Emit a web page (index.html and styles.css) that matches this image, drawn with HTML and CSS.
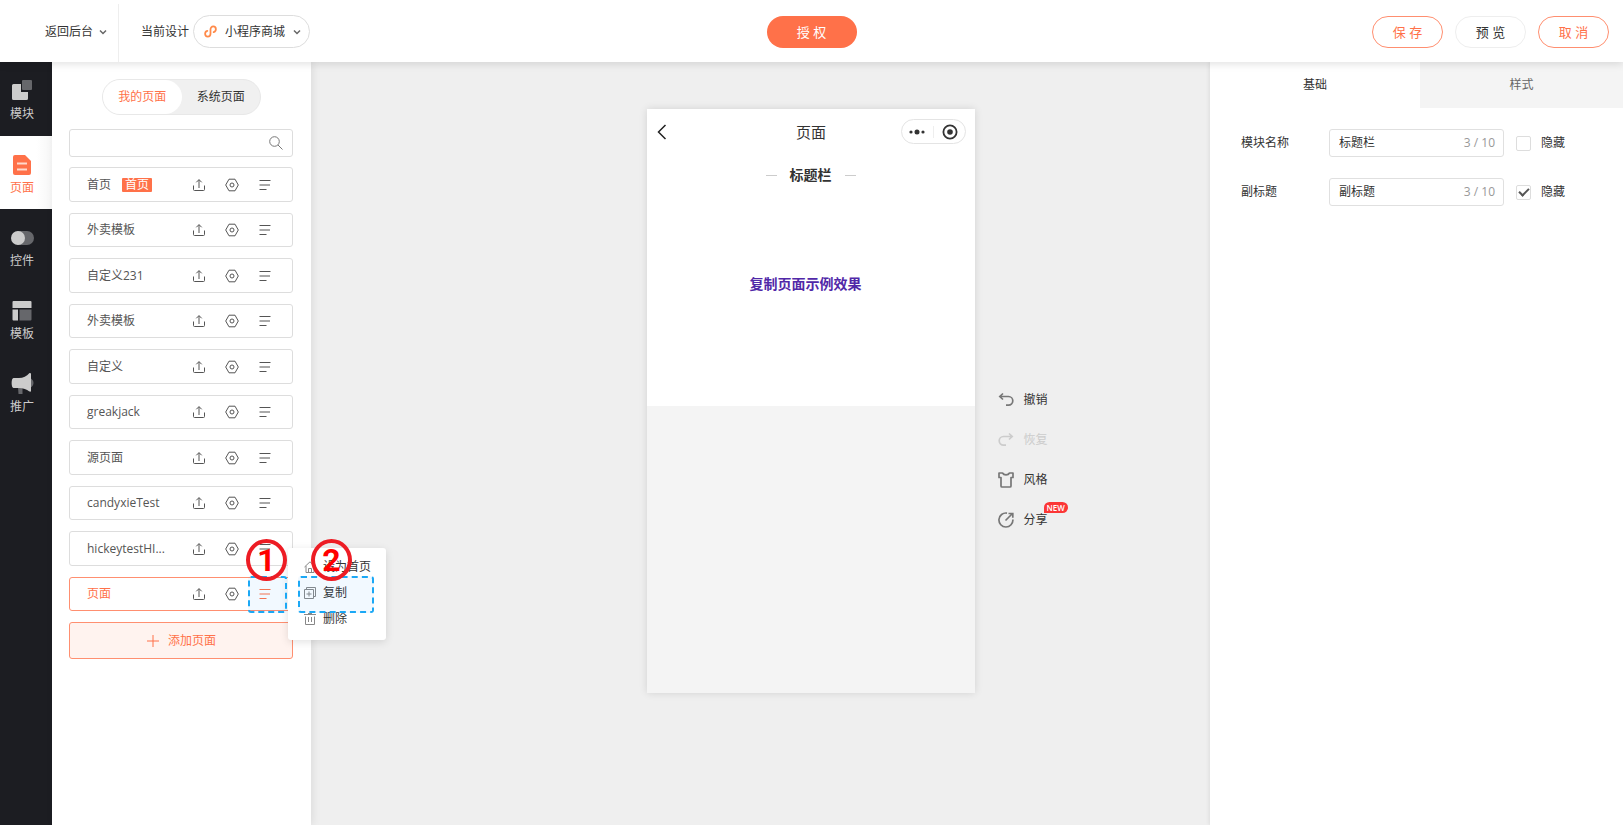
FILE: index.html
```html
<!DOCTYPE html>
<html lang="zh-CN">
<head>
  <meta charset="UTF-8">
  <meta name="viewport" content="width=device-width, initial-scale=1.0">
  <title>小程序商城</title>
  <link rel="stylesheet" href="styles.css">
</head>
<body>
  <!-- Shared icons -->
  <svg class="sprite" aria-hidden="true">
    <symbol id="i-chevron" viewBox="0 0 8 8"><path d="M1 2.5l3 3 3-3" fill="none" stroke="currentColor" stroke-width="1.5"/></symbol>
    <symbol id="i-upload" viewBox="0 0 14 14"><path d="M1.5 7.5v4a1 1 0 0 0 1 1h9a1 1 0 0 0 1-1v-4M7 10V1.8M4.3 4.3L7 1.6l2.7 2.7" fill="none" stroke="currentColor"/></symbol>
    <symbol id="i-set" viewBox="0 0 14 14"><path d="M4 1.2h6L13.3 7 10 12.8H4L.7 7z" fill="none" stroke="currentColor" stroke-linejoin="round"/><circle cx="7" cy="7" r="2" fill="none" stroke="currentColor"/></symbol>
    <symbol id="i-menu" viewBox="0 0 14 14"><path d="M1.5 2.5h11M1.5 7h10.500M1.5 11.5h7" fill="none" stroke="currentColor"/></symbol>
  </svg>

  <header class="header">
    <div class="header-left">
      <button class="back">返回后台 <svg class="chevron"><use href="#i-chevron"/></svg></button>
      <span class="design-label">当前设计</span>
      <button class="design-select">
        <svg class="logo" viewBox="0 0 14 14"><path d="M3.600 6.300C2 6.800 1.200 8 1.200 9.400c0 1.700 1.300 3 2.900 3S7 11.100 7 9.400V4.600c0-1.700 1.300-3 2.900-3s2.900 1.300 2.900 3c0 1.400-.8 2.600-2.400 3.100" fill="none" stroke="#ff8a4a" stroke-width="1.900" stroke-linecap="round"/></svg>
        小程序商城
        <svg class="chevron"><use href="#i-chevron"/></svg>
      </button>
    </div>
    <button class="btn btn-primary">授 权</button>
    <div class="header-right">
      <button class="btn btn-outline">保 存</button>
      <button class="btn">预 览</button>
      <button class="btn btn-outline">取 消</button>
    </div>
  </header>

  <main class="main">
    <nav class="nav">
      <a class="nav-item before-active" href="#module">
        <svg viewBox="0 0 24 22"><path d="M2 5.500a1.500 1.500 0 0 1 1.500-1.500H11v8h7v6.500a1.500 1.500 0 0 1-1.500 1.500h-13A1.500 1.500 0 0 1 2 18.500z" fill="#ccc"/><rect x="12" y="0" width="10" height="10" rx="1" fill="#66676b"/></svg>
        模块
      </a>
      <a class="nav-item active" href="#page">
        <svg viewBox="0 0 24 22"><path d="M5 1h10l6 6v12a2 2 0 0 1-2 2H5a2 2 0 0 1-2-2V3a2 2 0 0 1 2-2z" fill="#ff7149"/><path d="M7 9.500h10M7 15.500h10" stroke="#ffd9cc" stroke-width="2"/></svg>
        页面
      </a>
      <a class="nav-item after-active" href="#widget">
        <svg viewBox="0 0 24 22"><rect x="3" y="4" width="21" height="14" rx="7" fill="#66676b"/><circle cx="8" cy="11" r="7" fill="#ccc"/></svg>
        控件
      </a>
      <a class="nav-item" href="#template">
        <svg viewBox="0 0 24 22"><path d="M2.500 2a1 1 0 0 1 1-1h17a1 1 0 0 1 1 1v6h-19zM2.500 9.500H8v11H3.500a1 1 0 0 1-1-1z" fill="#ccc"/><path d="M9.500 9.500h12v10a1 1 0 0 1-1 1h-11z" fill="#66676b"/></svg>
        模板
      </a>
      <a class="nav-item" href="#promote">
        <svg viewBox="0 0 24 22"><path d="M8 14h4.500v7H8.500zM20 5c2.500 1 3.500 3 3.500 5S22 14 20 15z" fill="#66676b"/><path d="M3.500 5H9c4 0 8-2 10-4.500 1-.8 2-.5 2 .5v17c0 1-1 1-2 .3-2-2-6-3.300-10-3.300H3.500C1 15 1 5 3.500 5z" fill="#ccc"/></svg>
        推广
      </a>
    </nav>

    <section class="pages">
      <div class="switch">
        <button class="on">我的页面</button>
        <button>系统页面</button>
      </div>
      <label class="search">
        <input type="text" aria-label="搜索页面">
        <svg viewBox="0 0 14 14"><circle cx="5.500" cy="5.500" r="4.800" fill="none" stroke="#777"/><path d="M9 9l4.500 4.500" stroke="#777"/></svg>
      </label>
      <ul class="page-list">
        <li class="page-row">
          <span class="name">首页 <em class="tag">首页</em></span>
          <button aria-label="上传"><svg><use href="#i-upload"/></svg></button>
          <button aria-label="设置"><svg><use href="#i-set"/></svg></button>
          <button aria-label="更多"><svg><use href="#i-menu"/></svg></button>
        </li>
        <li class="page-row">
          <span class="name">外卖模板</span>
          <button aria-label="上传"><svg><use href="#i-upload"/></svg></button>
          <button aria-label="设置"><svg><use href="#i-set"/></svg></button>
          <button aria-label="更多"><svg><use href="#i-menu"/></svg></button>
        </li>
        <li class="page-row">
          <span class="name">自定义231</span>
          <button aria-label="上传"><svg><use href="#i-upload"/></svg></button>
          <button aria-label="设置"><svg><use href="#i-set"/></svg></button>
          <button aria-label="更多"><svg><use href="#i-menu"/></svg></button>
        </li>
        <li class="page-row">
          <span class="name">外卖模板</span>
          <button aria-label="上传"><svg><use href="#i-upload"/></svg></button>
          <button aria-label="设置"><svg><use href="#i-set"/></svg></button>
          <button aria-label="更多"><svg><use href="#i-menu"/></svg></button>
        </li>
        <li class="page-row">
          <span class="name">自定义</span>
          <button aria-label="上传"><svg><use href="#i-upload"/></svg></button>
          <button aria-label="设置"><svg><use href="#i-set"/></svg></button>
          <button aria-label="更多"><svg><use href="#i-menu"/></svg></button>
        </li>
        <li class="page-row">
          <span class="name">greakjack</span>
          <button aria-label="上传"><svg><use href="#i-upload"/></svg></button>
          <button aria-label="设置"><svg><use href="#i-set"/></svg></button>
          <button aria-label="更多"><svg><use href="#i-menu"/></svg></button>
        </li>
        <li class="page-row">
          <span class="name">源页面</span>
          <button aria-label="上传"><svg><use href="#i-upload"/></svg></button>
          <button aria-label="设置"><svg><use href="#i-set"/></svg></button>
          <button aria-label="更多"><svg><use href="#i-menu"/></svg></button>
        </li>
        <li class="page-row">
          <span class="name">candyxieTest</span>
          <button aria-label="上传"><svg><use href="#i-upload"/></svg></button>
          <button aria-label="设置"><svg><use href="#i-set"/></svg></button>
          <button aria-label="更多"><svg><use href="#i-menu"/></svg></button>
        </li>
        <li class="page-row">
          <span class="name">hickeytestHI...</span>
          <button aria-label="上传"><svg><use href="#i-upload"/></svg></button>
          <button aria-label="设置"><svg><use href="#i-set"/></svg></button>
          <button aria-label="更多"><svg><use href="#i-menu"/></svg></button>
        </li>
        <li class="page-row selected">
          <span class="name">页面</span>
          <button aria-label="上传"><svg><use href="#i-upload"/></svg></button>
          <button aria-label="设置"><svg><use href="#i-set"/></svg></button>
          <button class="more" aria-label="更多"><svg><use href="#i-menu"/></svg></button>

          <!-- Row menu -->
          <div class="popup">
            <button><svg viewBox="0 0 12 12"><path d="M.5 6L6 .8 11.500 6M2 5v6.500h8V5M4.500 11.500V7.500h3v4" fill="none" stroke="currentColor"/></svg>设为首页</button>
            <button><svg viewBox="0 0 12 12"><path d="M.5 2.500h9v9h-9zM2.500 2.500v-2h9v9h-2M5 4.500v5M2.500 7h5" fill="none" stroke="currentColor"/></svg>复制</button>
            <button><svg viewBox="0 0 12 12"><path d="M0 1.500h12M4 .5h4M1.500 3.500v8h9v-8M4.500 4v5M7.500 4v5" fill="none" stroke="currentColor"/></svg>删除</button>
          </div>

          <!-- Step marks -->
          <span class="mark mark-more"></span>
          <span class="mark mark-copy"></span>
          <span class="step step-one">1</span>
          <span class="step step-two">2</span>
        </li>
      </ul>
      <button class="add-page">
        <svg viewBox="0 0 14 14"><path d="M7 1v12M1 7h12" stroke="currentColor"/></svg>
        添加页面
      </button>
    </section>

    <section class="canvas">
      <div class="phone">
        <div class="screen">
          <div class="phone-bar">
            <button class="phone-back" aria-label="返回"><svg viewBox="0 0 10 16"><path d="M8.500 1L1.500 8l7 7" fill="none" stroke="#222" stroke-width="1.500"/></svg></button>
            <span>页面</span>
            <div class="capsule">
              <svg viewBox="0 0 16 6"><circle cx="2" cy="3" r="1.600"/><circle cx="8" cy="3" r="2.500"/><circle cx="14" cy="3" r="1.600"/></svg>
              <i></i>
              <svg class="target" viewBox="0 0 16 16"><circle cx="8" cy="8" r="6.600" fill="none" stroke="#333" stroke-width="1.800"/><circle cx="8" cy="8" r="2.800"/></svg>
            </div>
          </div>
          <h2 class="title-bar">标题栏</h2>
          <p class="sample">复制页面示例效果</p>
        </div>
      </div>
      <div class="tools">
        <button><svg viewBox="0 0 16 16"><path d="M5 1.500L1.800 4.500 5 7.500M2 4.500h8.500a4.300 4.300 0 0 1 0 8.600H8" fill="none" stroke="currentColor" stroke-width="1.700"/></svg>撤销</button>
        <button disabled><svg viewBox="0 0 16 16"><path d="M11 1.500l3.200 3-3.200 3M14 4.500H5.500a4.300 4.300 0 0 0 0 8.600H8" fill="none" stroke="currentColor" stroke-width="1.700"/></svg>恢复</button>
        <button><svg viewBox="0 0 16 16"><path d="M1 1h3.500C5.200 2.300 6.300 2.800 8 2.800s2.800-.5 3.500-1.800H15v4.500h-2V14a1 1 0 0 1-1 1H4a1 1 0 0 1-1-1V5.500H1z" fill="none" stroke="currentColor" stroke-width="1.700" stroke-linejoin="round"/></svg>风格</button>
        <button><svg viewBox="0 0 16 16"><path d="M9 1.100A7 7 0 1 0 14.900 7.500M7.500 8.500L14 2M10.500 1.500h4.300v4.300" fill="none" stroke="currentColor" stroke-width="1.700"/></svg>分享<em class="new">NEW</em></button>
      </div>
    </section>

    <aside class="props">
      <div class="tabs">
        <button class="on">基础</button>
        <button>样式</button>
      </div>
      <form class="form">
        <div class="field">
          <label for="moduleName">模块名称</label>
          <div class="input"><input id="moduleName" type="text" value="标题栏"><span>3 / 10</span></div>
          <input id="hideName" type="checkbox">
          <label for="hideName">隐藏</label>
        </div>
        <div class="field">
          <label for="subTitle">副标题</label>
          <div class="input"><input id="subTitle" type="text" value="副标题"><span>3 / 10</span></div>
          <input id="hideSub" type="checkbox" checked>
          <label for="hideSub">隐藏</label>
        </div>
      </form>
    </aside>
  </main>
</body>
</html>
```
FILE: styles.css
```css
* {
  box-sizing: border-box;
}

body {
  margin: 0;
  min-height: 100vh;
  display: flex;
  flex-direction: column;
  font-family: "Open Sans", "Noto Sans CJK SC", sans-serif;
  font-size: 12px;
  line-height: 18px;
  color: #333;
  background: #efefef;
}

button {
  display: flex;
  align-items: center;
  padding: 0;
  border: none;
  background: none;
  font: inherit;
  color: inherit;
  cursor: pointer;
}

input {
  font: inherit;
  color: inherit;
}

em,
i {
  font-style: normal;
}

svg {
  flex: none;
}

.sprite {
  position: absolute;
  width: 0;
  height: 0;
}

/* Header */
.header {
  position: relative;
  z-index: 3;
  display: grid;
  grid-template-columns: 1fr auto 1fr;
  align-items: center;
  height: 62px;
  padding-top: 1px;
  background: #fff;
  box-shadow: 0 2px 8px rgba(0, 0, 0, 0.12);
}

.header-left {
  display: flex;
  align-items: center;
  align-self: stretch;
}

.chevron {
  width: 8px;
  height: 8px;
  color: #666;
}

.back {
  align-self: flex-end;
  gap: 6px;
  width: 119px;
  height: 58px;
  padding: 0 0 3px 45px;
  border-right: 1px solid #eee;
}

.design-label {
  margin-left: 22px;
}

.design-select {
  gap: 8px;
  height: 33px;
  margin-left: 4px;
  padding: 0 8px 0 10px;
  border: 1px solid #ddd;
  border-radius: 17px;
}

.logo {
  width: 13px;
  height: 13px;
}

.header-right {
  display: flex;
  justify-content: flex-end;
  gap: 12px;
  padding-right: 14px;
}

.btn {
  justify-content: center;
  width: 71px;
  height: 32px;
  border: 1px solid #eee;
  border-radius: 16px;
  font-size: 13px;
}

.btn-outline {
  border-color: #ff8f70;
  color: #ff7149;
}

.btn-primary {
  width: 90px;
  border: none;
  background: #ff7149;
  color: #fff;
}

.main {
  flex: 1;
  display: grid;
  grid-template-columns: 52px 259px 1fr 413px;
}

/* Left navigation */
.nav {
  background: #1c1d22;
}

.nav-item {
  display: flex;
  flex-direction: column;
  align-items: center;
  gap: 3px;
  height: 73px;
  padding: 18px 8px 0 0;
  background: #1c1d22;
  color: #ccc;
  text-decoration: none;
}

.nav-item svg {
  width: 24px;
  height: 22px;
}

.nav-item.active {
  background: linear-gradient(to right, #fff 70%, #f6f6f6);
  color: #ff7149;
}

.before-active {
  height: 74px;
  border-bottom-right-radius: 4px;
}

.after-active {
  border-top-right-radius: 4px;
}

/* Page list */
.pages {
  position: relative;
  z-index: 2;
  padding: 17px 18px 0 17px;
  background: #fff;
  box-shadow: 2px 0 8px rgba(0, 0, 0, 0.08);
}

.switch {
  display: flex;
  width: 159px;
  height: 36px;
  margin: 0 auto 14px 33px;
  border: 1px solid #e8e8e8;
  border-radius: 18px;
  background: #f0f0f0;
}

.switch button {
  flex: 1;
  justify-content: center;
  border-radius: 17px;
}

.switch .on {
  background: #fff;
  color: #ff7149;
}

.search {
  display: flex;
  align-items: center;
  height: 28px;
  margin-bottom: 10px;
  padding-right: 9px;
  border: 1px solid #ddd;
  border-radius: 3px;
}

.search input {
  flex: 1;
  min-width: 0;
  padding: 0 10px;
  border: none;
  outline: none;
  background: none;
}

.search svg {
  width: 14px;
  height: 14px;
}

.page-list {
  display: grid;
  grid-auto-rows: 35px 34px;
  row-gap: 11px;
  margin: 0;
  padding: 0;
  list-style: none;
}

.page-row {
  position: relative;
  display: flex;
  align-items: center;
  padding: 0 11px 0 17px;
  border: 1px solid #ddd;
  border-radius: 3px;
  color: #555;
}

.page-row .name {
  flex: 1;
  display: flex;
  align-items: center;
}

.page-row > button {
  justify-content: center;
  width: 33px;
  height: 32px;
}

.page-row > button svg {
  width: 14px;
  height: 14px;
}

.tag {
  margin-left: 11px;
  padding: 0 3px;
  border-radius: 1px;
  line-height: 14px;
  background: #ff7149;
  color: #fff;
}

.selected {
  border-color: #ff8f70;
}

.selected .name,
.selected .more {
  color: #ff7149;
}

.popup {
  position: absolute;
  left: 218px;
  top: -30px;
  width: 98px;
  padding: 6px 0 8px 16px;
  border-radius: 3px;
  background: #fff;
  box-shadow: 0 2px 8px rgba(0, 0, 0, 0.12);
  color: #333;
}

.popup button {
  gap: 7px;
  height: 26px;
}

.popup svg {
  width: 12px;
  height: 12px;
  color: #888;
}

.mark {
  position: absolute;
  top: -2px;
  height: 37px;
  border: 2px dashed #1ba8f5;
  border-radius: 3px;
  background: rgba(30, 150, 255, 0.06);
}

.mark-more {
  left: 178px;
  width: 39px;
}

.mark-copy {
  left: 228px;
  width: 76px;
}

.step {
  position: absolute;
  top: -39px;
  display: flex;
  align-items: center;
  justify-content: center;
  width: 41px;
  height: 42px;
  border: 4px solid #ed1c24;
  border-radius: 50%;
  font: bold 32px Roboto, sans-serif;
  color: #f00;
}

.step-one {
  left: 176px;
}

.step-two {
  left: 241px;
}

.add-page {
  justify-content: center;
  gap: 8px;
  width: 100%;
  height: 37px;
  margin-top: 11px;
  border: 1px solid #ff8f70;
  border-radius: 3px;
  background: #fff3ef;
  color: #ff7149;
}

.add-page svg {
  width: 14px;
  height: 14px;
}

/* Canvas, padded so that the phone sits in the middle of the window */
.canvas {
  display: grid;
  grid-template-columns: 1fr auto 1fr;
  align-items: start;
  padding: 47px 0 40px 100px;
}

.phone {
  grid-column: 2;
  width: 328px;
  min-height: 584px;
  background: #f4f4f4;
  box-shadow: 0 0 8px rgba(0, 0, 0, 0.12);
}

.screen {
  height: 297px;
  background: #fff;
}

.phone-bar {
  display: grid;
  grid-template-columns: 1fr auto 1fr;
  align-items: center;
  height: 45px;
  padding: 0 9px 0 10px;
  font-size: 15px;
}

.phone-back svg {
  width: 10px;
  height: 16px;
}

.capsule {
  display: flex;
  align-items: center;
  justify-self: end;
  gap: 8px;
  height: 25px;
  padding: 0 7px;
  border: 1px solid #e4e4e4;
  border-radius: 13px;
}

.capsule svg {
  width: 16px;
  height: 6px;
  fill: #333;
}

.capsule i {
  width: 1px;
  height: 12px;
  background: #eee;
}

.capsule .target {
  height: 16px;
}

.title-bar {
  display: flex;
  align-items: center;
  justify-content: center;
  gap: 13px;
  height: 42px;
  margin: 0;
  font-size: 14px;
}

.title-bar::before,
.title-bar::after {
  content: "";
  width: 11px;
  height: 1px;
  background: #ccc;
}

.sample {
  margin: 79px 0 0 103px;
  font-size: 14px;
  font-weight: bold;
  color: #5128a8;
}

.tools {
  display: flex;
  flex-direction: column;
  align-items: flex-start;
  margin: 271px 0 0 23px;
}

.tools button {
  gap: 10px;
  height: 40px;
}

.tools svg {
  width: 16px;
  height: 16px;
  color: #777;
}

.tools button:disabled,
.tools button:disabled svg {
  color: #ccc;
}

.new {
  align-self: flex-start;
  margin: 2px 0 0 -14px;
  padding: 0 3px;
  border-radius: 6px 6px 6px 0;
  background: #fb3636;
  font-size: 8px;
  font-weight: 600;
  line-height: 11px;
  color: #fff;
}

/* Properties */
.props {
  background: #fff;
  box-shadow: -1px 0 4px rgba(0, 0, 0, 0.08);
}

.tabs {
  display: grid;
  grid-template-columns: 210px 1fr;
  height: 46px;
}

.tabs button {
  justify-content: center;
  background: #f4f4f4;
  color: #666;
}

.tabs .on {
  background: #fff;
  color: #333;
}

.form {
  display: grid;
  gap: 21px;
  padding: 21px 0 0 31px;
}

.field {
  display: flex;
  align-items: center;
}

.field label:first-child {
  width: 88px;
}

.input {
  display: flex;
  align-items: center;
  width: 175px;
  height: 28px;
  margin-right: 12px;
  padding: 0 8px 0 9px;
  border: 1px solid #e0e0e0;
  border-radius: 3px;
}

.input input {
  flex: 1;
  min-width: 0;
  padding: 0;
  border: none;
  outline: none;
}

.input span {
  color: #999;
}

input[type="checkbox"] {
  appearance: none;
  display: grid;
  place-items: center;
  width: 15px;
  height: 15px;
  margin: 0 10px 0 0;
  border: 1px solid #ddd;
  border-radius: 2px;
}

input[type="checkbox"]:checked::before {
  content: "";
  width: 8px;
  height: 4px;
  margin-bottom: 3px;
  border: solid #555;
  border-width: 0 0 2px 2px;
  transform: rotate(-45deg);
}
```
